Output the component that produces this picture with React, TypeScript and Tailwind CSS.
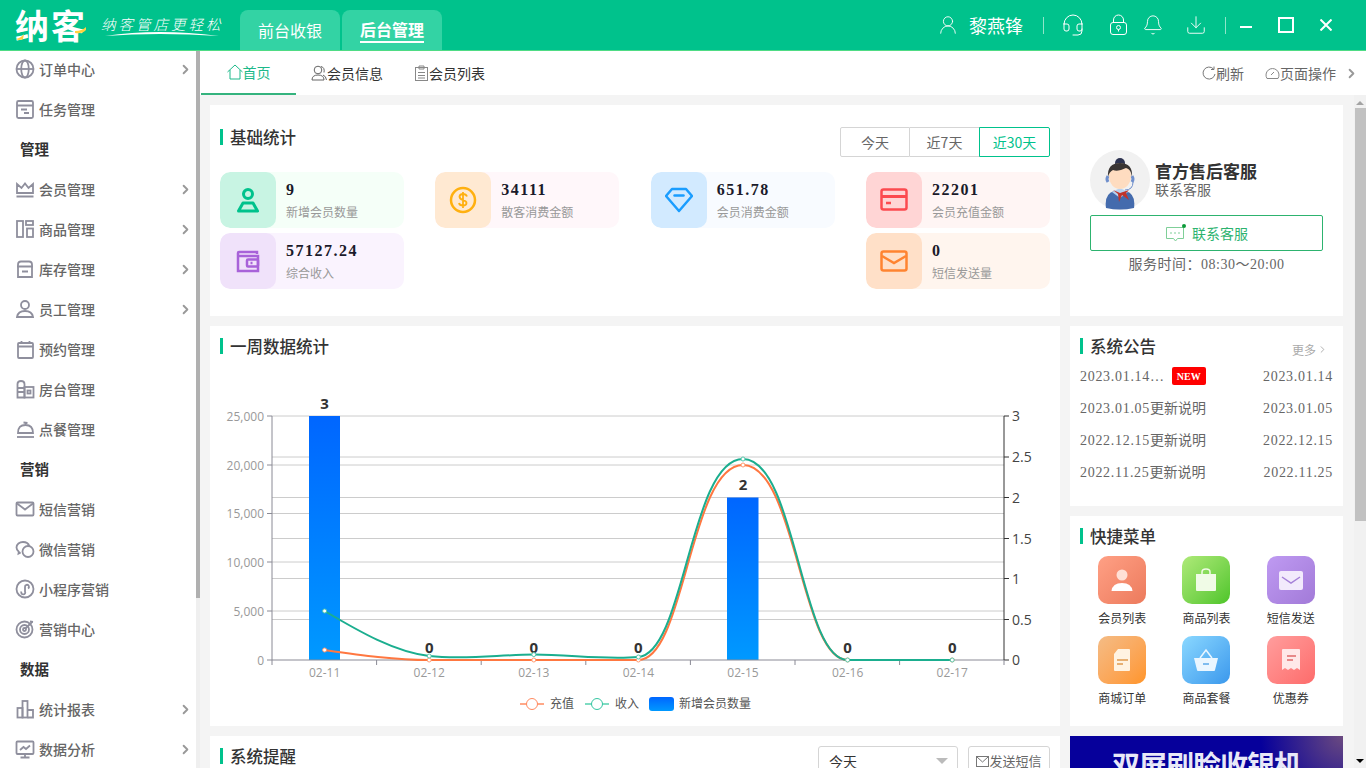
import type { ReactNode } from "react";
import { ChevronRight, Headset, Bell, Download, UserRound } from "lucide-react";

const serif = "[font-family:'Liberation_Serif','Noto_Sans_CJK_SC',serif]";

const sideIcons: Record<string, ReactNode> = {
  globe: (<><circle cx="10" cy="10" r="8.5" /><ellipse cx="10" cy="10" rx="3.8" ry="8.5" /><path d="M1.5 10h17" /></>),
  task: (<><rect x="2" y="2" width="16" height="17" rx="1.5" /><path d="M2 6.5h16M6 10.5h6M9 14h5" /></>),
  crown: (<><path d="M2 14V5l4.5 4L10 4.5 13.5 9 18 5v9z" /><path d="M1.5 17.5h17" strokeWidth="2" /></>),
  goods: (<><rect x="2" y="2" width="6" height="16" /><rect x="11" y="2" width="7" height="4" /><rect x="12" y="9.5" width="6" height="8.500" /></>),
  stock: (<><path d="M3 7V5.500Q3 2.500 6 2.500h8q3 0 3 3V7" /><path d="M2 7.500h16M3 7.500V18h14V7.500M7 12.500h6" /></>),
  staff: (<><circle cx="10" cy="6" r="4" /><path d="M2 18q1-6 8-6t8 6z" /></>),
  book: (<><rect x="3" y="4" width="15" height="15" rx="1" /><path d="M3 7.500h15M6.500 2v3M14.500 2v3M7 11h.01M10.500 11h.01M14 11h.01M7 14.500h.01M10.500 14.500h.01M14 14.500h.01" /></>),
  room: (<><path d="M2.500 18.500V5q0-3 3.500-3t3.500 3v13.500zM2.500 9h7M2.500 13h7" /><rect x="9.500" y="8" width="9" height="10.500" /><rect x="12.500" y="11.500" width="3" height="3" /></>),
  bell: (<><path d="M3 14q0-8 7.500-8T18 14zM10.500 6V3.500M8.500 3.500l4 .5" /><path d="M2 18h17" /></>),
  mail: (<><rect x="1.500" y="3.500" width="17" height="13" rx="1" /><path d="M2 4.500l8 6 8-6" /></>),
  wechat: (<><path d="M8 3C4.500 3 1.500 5.300 1.500 8.500c0 1.800 1 3.200 2.300 4.200l-.3 2 2.200-1.200" /><path d="M8 3c3 0 5.500 1.600 6.300 4" /><circle cx="13" cy="12.500" r="5.500" /><path d="M11 12h.01M15 12h.01" /></>),
  mini: (<><circle cx="10" cy="10" r="8.500" /><path d="M6.500 12.500a2 2 0 1 0 3.500 0V8a2 2 0 1 1 3 1.500" /></>),
  target: (<><circle cx="9.500" cy="10.500" r="8" /><circle cx="9.500" cy="10.500" r="4.500" /><circle cx="9.500" cy="10.500" r="1.500" /><path d="M10 10l7-7M15 2.500l3 .5" /></>),
  chart: (<><rect x="2.500" y="9" width="5" height="9.500" /><rect x="7.500" y="2" width="5" height="16.500" /><path d="M12.500 11h5.500v7.500h-5.500" /></>),
  screen: (<><rect x="1.500" y="2.500" width="17" height="12.500" rx="1" /><path d="M5 11l3.500-3 2.500 2 4-3.500M10 15v3M5.500 18.500h9" /></>),
};

type SideItem = { label: string; icon?: string; arrow?: boolean };

const sideItems: SideItem[] = [
  { label: "订单中心", icon: "globe", arrow: true },
  { label: "任务管理", icon: "task" },
  { label: "管理" },
  { label: "会员管理", icon: "crown", arrow: true },
  { label: "商品管理", icon: "goods", arrow: true },
  { label: "库存管理", icon: "stock", arrow: true },
  { label: "员工管理", icon: "staff", arrow: true },
  { label: "预约管理", icon: "book" },
  { label: "房台管理", icon: "room" },
  { label: "点餐管理", icon: "bell" },
  { label: "营销" },
  { label: "短信营销", icon: "mail" },
  { label: "微信营销", icon: "wechat" },
  { label: "小程序营销", icon: "mini" },
  { label: "营销中心", icon: "target" },
  { label: "数据" },
  { label: "统计报表", icon: "chart", arrow: true },
  { label: "数据分析", icon: "screen", arrow: true },
];

function Sidebar() {
  return (
    <div className="flex w-[200px] shrink-0 bg-white">
      <div className="w-[196px] overflow-hidden">
        <div className="mt-[-2px]">
          {sideItems.map((item) =>
            item.icon ? (
              <div key={item.label} className="flex h-10 items-center pl-[15px] pr-[3px]">
                <svg width="20" height="20" viewBox="0 0 20 20" fill="none" stroke="#8f8f9d" strokeWidth="1.800" className="shrink-0">
                  {sideIcons[item.icon]}
                </svg>
                <span className="ml-1 flex-1 text-[14px] font-medium text-[#666]">{item.label}</span>
                {item.arrow && <ChevronRight size={15} strokeWidth={3} className="text-[#999]" />}
              </div>
            ) : (
              <div key={item.label} className="flex h-10 items-center pl-5 text-[14.500px] font-bold text-[#333]">
                {item.label}
              </div>
            )
          )}
        </div>
      </div>
      <div className="flex w-1 flex-col">
        <div className="h-[547px] bg-[#b0b0b0]" />
        <div className="flex-1 bg-[#efefef]" />
      </div>
    </div>
  );
}

function Header() {
  return (
    <div className="flex h-[51px] shrink-0 items-end border-b border-[#4fdc85] bg-[#00c28c] text-white">
      <div className="relative mb-[4px] ml-[15px] flex h-[42px] w-[225px] items-center">
        <span className="text-[34px] leading-[42px] font-bold tracking-[2px]">纳客</span>
        <div className="relative mb-1 ml-[14px]">
          <span className="text-[14.500px] font-light tracking-[3px] whitespace-nowrap italic">纳客管店更轻松</span>
          <svg width="118" height="8" viewBox="0 0 118 8" className="absolute top-[19px] left-[2px]">
            <path d="M2 6Q55-2 116 6Q55 2 2 6z" fill="#fff" />
          </svg>
        </div>
        <svg width="24" height="8" viewBox="0 0 24 8" className="absolute top-[29px] left-0">
          <path d="M1 6Q6 5 9 1L8 6Q4 8 1 6z" fill="#ffd23f" />
        </svg>
        <svg width="12" height="8" viewBox="0 0 12 8" className="absolute top-[23px] left-[60px]">
          <path d="M0 4Q7 4 11 0V3Q7 7 0 6z" fill="#ffd23f" />
        </svg>
      </div>
      <div className="flex h-10 w-[100px] items-center justify-center rounded-t-lg bg-[#33d3a4] text-[16px]">前台收银</div>
      <div className="ml-[2px] flex h-10 w-[100px] items-center justify-center rounded-t-lg bg-[#33d3a4] text-[16px] font-bold">
        <span className="border-b-2 border-white leading-[23px]">后台管理</span>
      </div>
      <div className="flex h-[50px] flex-1 items-center pl-[495px]">
        <UserRound size={22} strokeWidth={1} />
        <span className="ml-[10px] w-[74px] text-[18px]">黎燕锋</span>
        <div className="h-[17px] w-px bg-[#8fe5c9]" />
        <Headset size={24} strokeWidth={1} className="ml-[17px]" />
        <svg width="20" height="22" viewBox="0 0 20 22" fill="none" stroke="#fff" className="ml-[24px]">
          <rect x="1.500" y="8.500" width="16" height="12" rx="2.500" />
          <path d="M4.500 8.500V6a5 5 0 0 1 10 0v2.500" />
          <circle cx="9.500" cy="13.500" r="2" />
          <path d="M9.500 15.500v2" />
        </svg>
        <Bell size={22} strokeWidth={1} className="ml-[13px]" />
        <Download size={22} strokeWidth={1} className="ml-[21px]" />
        <div className="ml-[18px] h-[17px] w-px bg-[#8fe5c9]" />
        <div className="mt-[3px] ml-[14px] h-[2px] w-[12px] bg-white" />
        <div className="ml-[26px] h-[16px] w-[16px] border-2 border-white" />
        <svg width="12" height="12" viewBox="0 0 12 12" stroke="#fff" strokeWidth="2" className="ml-[26px]">
          <path d="M.500.500l11 11M11.500.500l-11 11" />
        </svg>
      </div>
    </div>
  );
}

function TabBar() {
  return (
    <div className="flex h-[44px] shrink-0 items-stretch bg-white pl-px text-[14px] text-[#333]">
      <div className="flex w-[95px] items-center justify-center gap-0 border-b-2 border-[#35b37e] text-[#1cb98a]">
        <svg width="16" height="16" viewBox="0 0 16 16" fill="none" stroke="#1cb98a">
          <path d="M.500 8L8 1l7.500 7M3 6v9h10V6" />
        </svg>
        <span>首页</span>
      </div>
      <div className="ml-[15px] flex items-center">
        <svg width="16" height="16" viewBox="0 0 16 16" fill="none" stroke="#666">
          <circle cx="7" cy="5" r="3.800" />
          <path d="M1 15q0-5 6-5t6 5zM10 1.500q4 1 3 6M12 10q3 1 3.500 5" />
        </svg>
        <span>会员信息</span>
      </div>
      <div className="ml-[31px] flex items-center">
        <svg width="15" height="16" viewBox="0 0 15 16" fill="none" stroke="#888">
          <rect x="1.500" y="2.500" width="12" height="13" />
          <path d="M5 1h5v3H5zM4 7.500h7M4 10.500h7M4 13h7" />
        </svg>
        <span>会员列表</span>
      </div>
      <div className="ml-auto flex items-center text-[#666]">
        <svg width="14" height="14" viewBox="0 0 14 14" fill="none" stroke="#777">
          <path d="M11.500 3A6 6 0 1 0 13 8M12 .500V3.500H9" />
        </svg>
        <span>刷新</span>
        <svg width="15" height="14" viewBox="0 0 15 14" fill="none" stroke="#888" className="ml-[21px]">
          <path d="M2 12.500a6.500 6.500 0 1 1 11 0zM6 9l3-3" />
        </svg>
        <span>页面操作</span>
        <ChevronRight size={15} strokeWidth={3} className="mr-[7px] ml-[8px] text-[#999]" />
      </div>
    </div>
  );
}

function Title({ children, className }: { children: ReactNode; className?: string }) {
  return (
    <div className={`flex h-4 items-center gap-[7px] text-[16.500px] leading-none font-medium text-[#333] ${className ?? ""}`}>
      <i className="h-4 w-[3px] bg-[#00c28c]" />
      <span>{children}</span>
    </div>
  );
}

function StatCard({ value, label, box, bg, children, className }: {
  value: string;
  label: string;
  box: string;
  bg: string;
  children: ReactNode;
  className?: string;
}) {
  return (
    <div className={`flex h-14 overflow-hidden rounded-[10px] ${bg} ${className ?? ""}`}>
      <div className={`flex w-14 items-center justify-center rounded-[10px] ${box}`}>{children}</div>
      <div className="ml-[10px]">
        <div className={`mt-[7px] text-[16px] leading-[22px] font-bold tracking-[1.500px] text-[#1a1a2a] ${serif}`}>{value}</div>
        <div className="mt-[2px] text-[12px] leading-[18px] text-[#999]">{label}</div>
      </div>
    </div>
  );
}

function BasicStats() {
  return (
    <div className="h-[211px] shrink-0 bg-white px-[10px] pt-[22px]">
      <div className="flex items-center justify-between">
        <Title className="mb-[10px]">基础统计</Title>
        <div className="flex h-[30px] text-[14px] text-[#666]">
          <div className="flex w-[70px] items-center justify-center rounded-l-[2px] border border-[#d5d5d5]">今天</div>
          <div className="flex w-[70px] items-center justify-center border-y border-r border-[#d5d5d5]">近7天</div>
          <div className="ml-[-1px] flex w-[71px] items-center justify-center rounded-r-[2px] border border-[#00c28c] text-[#00c28c]">近30天</div>
        </div>
      </div>
      <div className="mt-[15px] grid grid-cols-4 gap-x-[31.330px] gap-y-[5px]">
        <StatCard value="9" label="新增会员数量" box="bg-[#c8f4e3]" bg="bg-[#f5fff8]">
          <svg width="26" height="28" viewBox="0 0 26 28" fill="none" stroke="#00c28c" strokeWidth="3">
            <circle cx="13" cy="8" r="4.500" />
            <path d="M8 17h10l4.500 8h-19z" strokeLinejoin="round" />
          </svg>
        </StatCard>
        <StatCard value="34111" label="散客消费金额" box="bg-[#ffe9d2]" bg="bg-[#fff7fa]">
          <svg width="28" height="28" viewBox="0 0 28 28" fill="none" stroke="#ffb010" strokeWidth="2.500">
            <circle cx="14" cy="14" r="12" />
            <path d="M18 10.500q-1-2.500-4-2.500t-3.500 2.500q0 2.500 3.500 3.500t3.500 3q0 2.500-3.500 2.500t-4-2.500M14 6v16" strokeWidth="1.800" />
          </svg>
        </StatCard>
        <StatCard value="651.78" label="会员消费金额" box="bg-[#d2eaff]" bg="bg-[#f8fbff]">
          <svg width="28" height="26" viewBox="0 0 28 26" fill="none" stroke="#1a9dff" strokeWidth="2.500" strokeLinejoin="round">
            <path d="M7 2h14l6 7-13 15L1 9z" />
            <path d="M9.500 8.500h9" strokeLinecap="round" />
          </svg>
        </StatCard>
        <StatCard value="22201" label="会员充值金额" box="bg-[#ffd5d5]" bg="bg-[#fff5f4]">
          <svg width="28" height="24" viewBox="0 0 28 24" fill="none" stroke="#fc4a4f" strokeWidth="2.500">
            <rect x="1.500" y="1.500" width="25" height="20" rx="2" />
            <path d="M1.500 8.500h25" strokeWidth="3" />
            <path d="M6 15h5" />
          </svg>
        </StatCard>
        <StatCard value="57127.24" label="综合收入" box="bg-[#f0e2fa]" bg="bg-[#faf3fe]">
          <svg width="24" height="24" viewBox="0 0 24 24" fill="none" stroke="#a862d9" strokeWidth="2.500">
            <path d="M21 5V3H3a1 1 0 0 0-1 1v18h20V7H3" />
            <rect x="11" y="10.500" width="11" height="7" rx="1" />
            <path d="M14.500 14h2" />
          </svg>
        </StatCard>
        <StatCard value="0" label="短信发送量" box="bg-[#ffe0c8]" bg="bg-[#fff5ee]" className="col-start-4">
          <svg width="28" height="22" viewBox="0 0 28 22" fill="none" stroke="#ff8431" strokeWidth="2.500">
            <rect x="1.500" y="1.500" width="25" height="19" rx="2" />
            <path d="M2 6l12 7 12-7" />
          </svg>
        </StatCard>
      </div>
    </div>
  );
}

const cats = [
  { x: 324.6, d: "02-11", v: "3", y: 409 },
  { x: 429.2, d: "02-12", v: "0", y: 653 },
  { x: 533.8, d: "02-13", v: "0", y: 653 },
  { x: 638.4, d: "02-14", v: "0", y: 653 },
  { x: 743, d: "02-15", v: "2", y: 490 },
  { x: 847.6, d: "02-16", v: "0", y: 653 },
  { x: 952.2, d: "02-17", v: "0", y: 653 },
];
const leftAxis = [["25,000", 416], ["20,000", 465], ["15,000", 513.5], ["10,000", 562], ["5,000", 611], ["0", 660]] as const;
const rightAxis = [["3", 416], ["2.5", 457], ["2", 497.500], ["1.5", 538.500], ["1", 578.500], ["0.5", 619.500], ["0", 660]] as const;
const incomePts = [[324.6, 611], [429.2, 656], [533.8, 654.6], [638.4, 657], [743, 459], [847.6, 660], [952.2, 660]];
const rechargePts = [[324.6, 650], [429.2, 660], [533.8, 660], [638.4, 660], [743, 465], [847.6, 660], [952.2, 660]];

function WeekChart() {
  return (
    <div className="h-[400px] shrink-0 bg-white pt-3">
      <Title className="ml-[10px]">一周数据统计</Title>
      <svg width="850" height="372" viewBox="210 354 850 372" className="block [font-family:'Open_Sans','Noto_Sans',sans-serif]">
        <defs>
          <linearGradient id="barFill" x1="0" y1="0" x2="0" y2="1">
            <stop offset="0" stopColor="#0066ff" />
            <stop offset="1" stopColor="#0099ff" />
          </linearGradient>
        </defs>
        {leftAxis.slice(0, 5).map(([, y]) => (
          <path key={y} d={`M272 ${y}H1004`} stroke="#ccc" />
        ))}
        {rightAxis.slice(1, 6).map(([, y]) => (
          <path key={y} d={`M272 ${y}H1004`} stroke="#ccc" />
        ))}
        <rect x="309" y="416" width="31" height="244" fill="url(#barFill)" />
        <rect x="727" y="497.500" width="31.500" height="162.500" fill="url(#barFill)" />
        <path d="M272 416V660H1004" fill="none" stroke="#8a8a95" />
        <path d="M1004 416V660" stroke="#333" />
        {leftAxis.map(([t, y]) => (
          <g key={t}>
            <path d={`M267 ${y}H272`} stroke="#8a8a95" />
            <text x="264" y={y + 4.500} textAnchor="end" fontSize="12" fill="#999">{t}</text>
          </g>
        ))}
        {rightAxis.map(([t, y]) => (
          <g key={t}>
            <path d={`M1004 ${y}H1009`} stroke="#333" />
            <text x="1012" y={y + 5} fontSize="14" fill="#444">{t}</text>
          </g>
        ))}
        {[272, 376.6, 481.200, 585.800, 690.400, 795, 899.600, 1004].map((x) => (
          <path key={x} d={`M${x} 660V665`} stroke="#8a8a95" />
        ))}
        {cats.map((c) => (
          <g key={c.d}>
            <text x={c.x} y="677" textAnchor="middle" fontSize="12" fill="#999">{c.d}</text>
            <text x={c.x} y={c.y} textAnchor="middle" fontSize="15" fontWeight="700" fill="#333">{c.v}</text>
          </g>
        ))}
        <path
          d="M324.600 650C360 655 395 660 429.200 660H638.400C685 660 690 465 743 465C796 465 801 660 847.600 660H952.200"
          fill="none"
          stroke="#ff7740"
          strokeWidth="2"
        />
        <path
          d="M324.600 611C360 632 395 652 429.200 656C465 660 500 654.600 533.800 654.600C570 654.600 605 660 638.400 657C685 653 690 459 743 459C796 459 801 660 847.600 660H952.200"
          fill="none"
          stroke="#1bae8f"
          strokeWidth="2"
        />
        {rechargePts.map(([x, y]) => (
          <circle key={x} cx={x} cy={y} r="2" fill="#fff" stroke="#ff9a70" />
        ))}
        {incomePts.map(([x, y]) => (
          <circle key={x} cx={x} cy={y} r="2" fill="#fff" stroke="#55c8ac" />
        ))}
        <path d="M520 704H544" stroke="#ffa888" strokeWidth="2" />
        <circle cx="532" cy="704" r="5.500" fill="#fff" stroke="#ff8a60" />
        <text x="550" y="708" fontSize="12" fill="#555" className="[font-family:'Noto_Sans_CJK_SC',sans-serif]">充值</text>
        <path d="M585 704H609" stroke="#7fdcc2" strokeWidth="2" />
        <circle cx="597" cy="704" r="5.500" fill="#fff" stroke="#35c6a2" />
        <text x="615" y="708" fontSize="12" fill="#555" className="[font-family:'Noto_Sans_CJK_SC',sans-serif]">收入</text>
        <rect x="649" y="697" width="25" height="14" rx="3" fill="url(#barFill)" />
        <text x="679" y="708" fontSize="12" fill="#555" className="[font-family:'Noto_Sans_CJK_SC',sans-serif]">新增会员数量</text>
      </svg>
    </div>
  );
}

function Reminder() {
  return (
    <div className="flex-1 bg-white px-[10px] pt-[10px]">
      <div className="flex items-start">
        <Title className="mt-[2px]">系统提醒</Title>
        <div className="ml-auto flex h-[30px] w-[140px] items-center justify-between rounded-[3px] border border-[#d5d5d5] pr-[9px] pl-[10px] text-[14px] text-[#333]">
          <span>今天</span>
          <i className="h-0 w-0 border-x-[6px] border-t-[6px] border-x-transparent border-t-[#bbb]" />
        </div>
        <div className="ml-[10px] flex h-[30px] w-[82px] items-center justify-center rounded-[3px] border border-[#d5d5d5] text-[13px] text-[#666]">
          <svg width="13" height="11" viewBox="0 0 13 11" fill="none" stroke="#777">
            <rect x=".500" y=".500" width="12" height="10" />
            <path d="M1 1l5.500 5L12 1" />
          </svg>
          <span>发送短信</span>
        </div>
      </div>
    </div>
  );
}

function ServiceCard() {
  return (
    <div className="h-[211px] shrink-0 bg-white px-5 pt-[45px]">
      <div className="flex items-center">
        <svg width="60" height="60" viewBox="0 0 60 60" className="shrink-0">
          <circle cx="30" cy="30" r="30" fill="#f1f1f1" />
          <circle cx="30" cy="13" r="5" fill="#2d3350" />
          <path d="M16 58q-2-14 8-17h12q10 3 8 17q-14 3-28 0z" fill="#446bad" />
          <path d="M22 42l8 6 8-6-8-4z" fill="#b7d2f0" />
          <ellipse cx="30" cy="26" rx="11" ry="13" fill="#fedcc0" />
          <path d="M18 27q-1-14 12-14t12 14q-1-8-6-9-8 4-13 2-4 2-5 7z" fill="#3a3533" />
          <path d="M18 32q-2-3 0-6M42 32q2-3 0-6" stroke="#6f8fcc" strokeWidth="3" fill="none" />
          <path d="M43 32q0 8-8 8" stroke="#6f8fcc" fill="none" />
          <path d="M23 40l7 3 9-3-3 3 3 7-7-5-3 7-1-8z" fill="#c0342b" />
        </svg>
        <div className="mt-[-2px] ml-[5px]">
          <div className="text-[17px] leading-[18px] font-bold text-[#333]">官方售后客服</div>
          <div className="mt-px text-[14px] leading-[16px] text-[#666]">联系客服</div>
        </div>
      </div>
      <div className="mt-[5px] flex h-9 w-[233px] items-center justify-center rounded-[2px] border border-[#2db36f] text-[14px] text-[#2db36f]">
        <svg width="22" height="20" viewBox="0 0 22 20" fill="none" stroke="#7fcf98" className="mr-[5px]">
          <path d="M1.500 4.500h17v11h-6l-2 2.500-2-2.500h-7zM5 10h2M9 10h2M13 10h2" />
          <circle cx="19" cy="3" r="2" fill="#0c9b3a" stroke="none" />
        </svg>
        <span>联系客服</span>
      </div>
      <div className={`mt-[4px] w-[233px] text-center text-[14px] leading-[20px] tracking-[.5px] text-[#666] ${serif}`}>服务时间：08:30～20:00</div>
    </div>
  );
}

const notices = [
  { t: "2023.01.05", d: "2023.01.05" },
  { t: "2022.12.15", d: "2022.12.15" },
  { t: "2022.11.25", d: "2022.11.25" },
];

function NoticeCard() {
  return (
    <div className="h-[180px] shrink-0 bg-white px-[10px] pt-3">
      <div className="mb-[3px] flex items-start justify-between pr-[5px]">
        <Title>系统公告</Title>
        <div className="flex h-[23px] items-center text-[12px] text-[#aaa]">
          更多
          <ChevronRight size={11} strokeWidth={2} className="ml-[1px]" />
        </div>
      </div>
      <div className={`text-[14px] text-[#666] ${serif}`}>
        <div className="flex h-6 items-center">
          <span className="tracking-[.7px]">2023.01.14…</span>
          <span className="ml-[7px] flex h-[18px] w-[34px] items-center justify-center rounded-[2px] bg-[#ff0000] text-[10px] font-bold text-white">NEW</span>
          <span className="ml-auto tracking-[.7px]">2023.01.14</span>
        </div>
        {notices.map((n) => (
          <div key={n.t} className="mt-2 flex h-6 items-center">
            <span className="tracking-[.7px]">{n.t}</span>
            <span>更新说明</span>
            <span className="ml-auto tracking-[.7px]">{n.d}</span>
          </div>
        ))}
      </div>
    </div>
  );
}

const quickMenus: { label: string; bg: string; icon: ReactNode }[] = [
  {
    label: "会员列表",
    bg: "from-[#ffa085] to-[#ec7a5c]",
    icon: (<><circle cx="12" cy="7" r="5.500" fill="#ffe0d6" /><path d="M1.500 23q1-8 10.500-8t10.500 8z" fill="#fff" /></>),
  },
  {
    label: "商品列表",
    bg: "from-[#aeea78] to-[#4cc527]",
    icon: (<><path d="M2 6h20v16a1 1 0 0 1-1 1H3a1 1 0 0 1-1-1z" fill="#f0fbe6" /><path d="M8 8V4q0-3 4-3t4 3v4" fill="none" stroke="#f0fbe6" strokeWidth="1.500" /></>),
  },
  {
    label: "短信发送",
    bg: "from-[#bf9af2] to-[#a27ad8]",
    icon: (<><rect x="0" y="3" width="24" height="19" rx="2" fill="#f2eafc" /><path d="M3 9l9 6 9-6" fill="none" stroke="#a580d8" strokeWidth="1.500" /></>),
  },
  {
    label: "商城订单",
    bg: "from-[#f4bc85] to-[#ff9526]",
    icon: (<><path d="M8 1h11a1 1 0 0 1 1 1v20a1 1 0 0 1-1 1H5a1 1 0 0 1-1-1V6z" fill="#fff3e2" /><path d="M7 12h11M7 16h6" stroke="#e09a4f" strokeWidth="1.500" /></>),
  },
  {
    label: "商品套餐",
    bg: "from-[#8ad8ff] to-[#3a98ec]",
    icon: (<><path d="M0 10h24l-3 12a1 1 0 0 1-1 1H4a1 1 0 0 1-1-1z" fill="#eaf6ff" /><path d="M6 10l6-8 6 8" fill="none" stroke="#eaf6ff" strokeWidth="1.500" /><path d="M9 16h6" stroke="#5aa8ea" strokeWidth="1.500" /></>),
  },
  {
    label: "优惠券",
    bg: "from-[#ff9d9d] to-[#fd6b6b]",
    icon: (<><path d="M4 1h16a1 1 0 0 1 1 1v20l-3-2-3 2-3-2-3 2-3-2-3 2V2a1 1 0 0 1 1-1z" fill="#ffe8e8" /><path d="M8 8h9M8 12h6" stroke="#e06a6a" strokeWidth="1.500" /></>),
  },
];

function QuickMenu() {
  return (
    <div className="h-[210px] shrink-0 bg-white pt-3">
      <Title className="ml-[10px]">快捷菜单</Title>
      <div className="mt-3 ml-[10px] grid w-[253px] grid-cols-3 gap-y-[9px]">
        {quickMenus.map((m) => (
          <div key={m.label} className="flex flex-col items-center">
            <div className={`flex h-12 w-12 items-center justify-center rounded-[10px] bg-linear-to-br ${m.bg}`}>
              <svg width="24" height="24" viewBox="0 0 24 24">{m.icon}</svg>
            </div>
            <div className="mt-[5px] text-[12px] leading-[18px] text-[#333]">{m.label}</div>
          </div>
        ))}
      </div>
    </div>
  );
}

function Banner() {
  return (
    <div className="flex-1 overflow-hidden bg-[#06009b] bg-[radial-gradient(circle_at_100%_0%,#6b4a80_0,#06009b_30%)] pt-[10px] text-center text-[28px] leading-[36px] font-bold tracking-[-1px] whitespace-nowrap text-[#e8e8f8]">
      双屏刷脸收银机
    </div>
  );
}

function PageScrollbar() {
  return (
    <div className="flex w-3 shrink-0 flex-col items-center bg-[#f1f1f1]">
      <i className="mt-[6px] mb-[3px] h-0 w-0 border-x-[4px] border-b-[4px] border-x-transparent border-b-[#a3a3a3]" />
      <div className="h-[413px] w-[11px] bg-[#c1c1c1]" />
      <i className="mt-auto mb-[5px] h-0 w-0 border-x-[4px] border-t-[4px] border-x-transparent border-t-black" />
    </div>
  );
}

export default function App() {
  return (
    <div className="flex h-[768px] w-[1366px] flex-col overflow-hidden bg-[#f4f4f4] [font-family:'Noto_Sans_CJK_SC','Noto_Sans',sans-serif]">
      <Header />
      <div className="flex min-h-0 flex-1">
        <Sidebar />
        <div className="flex min-w-0 flex-1 flex-col">
          <TabBar />
          <div className="flex min-h-0 flex-1">
            <div className="flex flex-1 gap-[10px] overflow-hidden pt-[10px] pr-[11px] pl-[10px]">
              <div className="flex w-[850px] flex-col gap-[10px]">
                <BasicStats />
                <WeekChart />
                <Reminder />
              </div>
              <div className="flex w-[273px] flex-col gap-[10px]">
                <ServiceCard />
                <NoticeCard />
                <QuickMenu />
                <Banner />
              </div>
            </div>
            <PageScrollbar />
          </div>
        </div>
      </div>
    </div>
  );
}
